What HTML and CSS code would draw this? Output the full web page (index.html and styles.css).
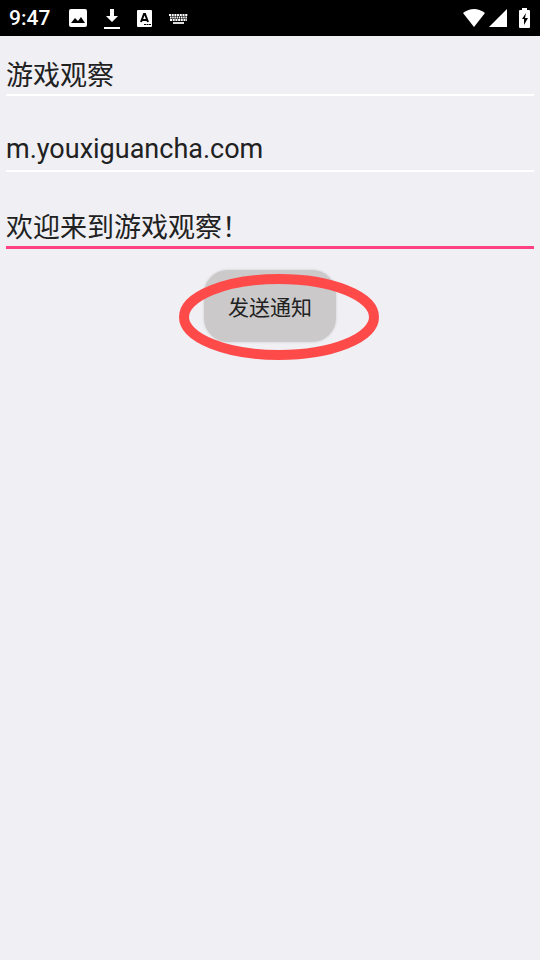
FILE: index.html
```html
<!DOCTYPE html>
<html lang="zh-CN">
<head>
    <meta charset="UTF-8">
    <meta name="viewport" content="width=device-width, initial-scale=1.0">
    <title>发送通知</title>
    <link rel="stylesheet" href="styles.css">
</head>
<body>
    <header class="status-bar">
        <span class="clock">9:47</span>

        <div class="status-left">
            <!-- image -->
            <svg width="18" height="18" viewBox="0 0 18 18">
                <rect width="18" height="18" rx="2" fill="#fff"/>
                <path d="M2 14l4-5 3 3 3-4 4 6z" fill="#000"/>
            </svg>
            <!-- download -->
            <svg width="16" height="22" viewBox="0 0 16 22">
                <path d="M6 2h4v7h4l-6 6-6-6h4z" fill="#fff"/>
                <rect y="20" width="16" height="2" fill="#fff"/>
            </svg>
            <!-- input language -->
            <svg width="15" height="17" viewBox="0 0 15 17">
                <rect width="15" height="17" rx="1" fill="#fff"/>
                <path d="M4 12L7 4h1l3 8M5 10h5" fill="none" stroke="#000" stroke-width="2"/>
                <path d="M7 14.500h7" stroke="#000" stroke-width="1" stroke-dasharray="2 .5"/>
            </svg>
            <!-- keyboard -->
            <svg width="19" height="11" viewBox="0 0 19 11">
                <path d="M0 2h19M1 7h17" fill="none" stroke="#fff" stroke-width="2" stroke-dasharray="2 .7"/>
                <path d="M1 4.500h17" fill="none" stroke="#fff" stroke-width="2" stroke-dasharray="1.500 .7"/>
                <path d="M4 10h11" stroke="#ddd" stroke-width="2"/>
            </svg>
        </div>

        <div class="status-right">
            <!-- wifi -->
            <svg width="22" height="18" viewBox="0 0 22 18">
                <path d="M0 4Q11-4 22 4L11 18z" fill="#fff"/>
            </svg>
            <!-- signal -->
            <svg width="18" height="18" viewBox="0 0 18 18">
                <path d="M18 0v18H0z" fill="#fff"/>
            </svg>
            <!-- battery -->
            <svg class="battery" width="11" height="20" viewBox="0 0 11 20">
                <path d="M3 0h5v2h2q1 0 1 1v16q0 1-1 1H1q-1 0-1-1V3q0-1 1-1h2z" fill="#fff"/>
                <path d="M7 5l-4 6h2v6l4-7H6z" fill="#000"/>
            </svg>
        </div>
    </header>

    <form class="notify-form">
        <input type="text" class="field" aria-label="标题" value="游戏观察">
        <input type="text" class="field" aria-label="网址" value="m.youxiguancha.com">
        <input type="text" class="field active" aria-label="内容" value="欢迎来到游戏观察！">

        <div class="send">
            <button type="button">发送通知</button>
            <svg class="ring" width="202" height="86" viewBox="0 0 202 86">
                <ellipse cx="101" cy="43" rx="95" ry="38" fill="none" stroke="#ff4a4a" stroke-width="10"/>
            </svg>
        </div>
    </form>
</body>
</html>
```

FILE: styles.css
```css
body {
    margin: 0;
    min-height: 100vh;
    background-color: #efeff4;
    color: #212121;
    font-family: Roboto, "Noto Sans CJK SC", sans-serif;
}

.status-bar {
    display: flex;
    align-items: center;
    height: 36px;
    padding: 0 10px 0 9px;
    background: #000;
    color: #fff;
}

.clock {
    font-size: 21px;
    font-weight: 500;
    line-height: 36px;
}

.status-left {
    display: flex;
    align-items: center;
    gap: 17px;
    margin-left: 19px;
}

.status-right {
    display: flex;
    align-items: center;
    gap: 4px;
    margin-left: auto;
}

.battery {
    margin-left: 8px;
}

.notify-form {
    display: flex;
    flex-direction: column;
    gap: 32px;
    padding: 16px 6px;
}

.field {
    box-sizing: border-box;
    width: 100%;
    height: 44px;
    padding: 0;
    border: none;
    border-bottom: 2px solid #fff;
    border-radius: 0;
    outline: none;
    background: transparent;
    color: inherit;
    font-family: inherit;
    font-size: 27px;
}

.field.active {
    height: 45px;
    border-bottom: 3px solid #ff4081;
}

.send {
    position: relative;
    align-self: center;
    margin-top: -11px;
}

.send button {
    display: block;
    width: 132px;
    height: 72px;
    padding: 0;
    border: none;
    border-radius: 24px;
    background: #cbc9ca;
    box-shadow: 0 0 3px rgba(0, 0, 0, 0.15);
    color: #212121;
    font-family: inherit;
    font-size: 21px;
    cursor: pointer;
}

/* hand-drawn mark over the button */
.ring {
    position: absolute;
    top: 4px;
    left: -26px;
    pointer-events: none;
}
```
